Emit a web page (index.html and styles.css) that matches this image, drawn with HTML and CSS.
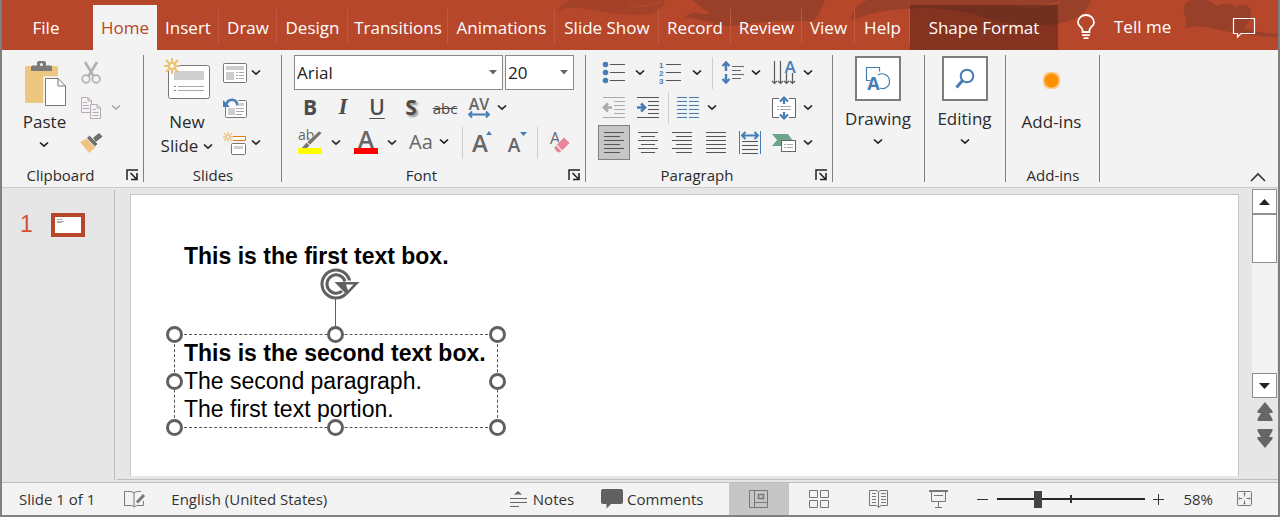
FILE: index.html
```html
<!DOCTYPE html>
<html lang="en">
<head>
<meta charset="utf-8">
<title>Presentation editor</title>
<link rel="stylesheet" href="styles.css">
</head>
<body>
<svg class="defs" aria-hidden="true">
  <symbol id="chev" viewBox="0 0 10 7"><path d="M1 1.500 5 5.200 9 1.500" fill="none" stroke="currentColor" stroke-width="1.700"/></symbol>
  <symbol id="launch" viewBox="0 0 13 12"><path d="M1 11V1H12" fill="none" stroke="#222" stroke-width="1.500"/><path d="M4.500 4 10.500 10M11 4V10.500H5" fill="none" stroke="#222" stroke-width="1.600"/></symbol>
</svg>
<div class="window">
<header class="titlebar">
  <svg class="art" viewBox="0 0 740 50" width="740" height="50" aria-hidden="true">
    <g fill="#98402a">
      <path d="M17 13C19 6 25 1 30 0H125C124 6 119 12 112 14 90 17 60 12 40 8 30 7 22 9 17 13Z" opacity=".6"/>
      <path d="M152 0H285C281 9 278 17 273 21 260 22 240 20 215 23 195 27 180 27 170 22L145 17C148 14 154 11 163 14 172 15 169 13 164 9Z"/>
      <path d="M311 20C312 9 320 2 328 0H551C548 10 540 18 528 21 505 29 470 26 440 16 410 7 370 6 340 12 326 15 318 18 311 20Z"/>
      <path d="M644 29C648 25 647 20 644 13 642 5 647 0 653 0H666C671 0 674 4 677 6 684 2 693 4 696 7 702 2 712 5 711 14 712 20 707 24 705 28 720 33 730 34 740 34V36C715 38 690 32 670 28 660 26 650 25 644 29Z"/>
    </g>
    <path d="M90 6C100 8 116 4 120 2M475 5C490 9 510 5 520 2" fill="none" stroke="#b5472b" stroke-width="2" stroke-dasharray="3 1"/>
  </svg>
  <nav class="tabs">
    <button class="tab tab-file">File</button>
    <button class="tab active">Home</button>
    <button class="tab">Insert</button>
    <button class="tab">Draw</button>
    <button class="tab">Design</button>
    <button class="tab">Transitions</button>
    <button class="tab">Animations</button>
    <button class="tab">Slide Show</button>
    <button class="tab">Record</button>
    <button class="tab">Review</button>
    <button class="tab">View</button>
    <button class="tab">Help</button>
    <button class="tab context">Shape Format</button>
  </nav>
  <button class="tellme">
    <svg width="20" height="26" viewBox="0 0 20 26" fill="none" stroke="#fff" stroke-width="1.800"><path d="M6.500 18V16C6 13 2 12 2 8.500A8 7.500 0 0 1 18 8.500C18 12 14 13 13.500 16V18Z"/><path d="M6 21.200H14M7.500 24.200H12.500"/></svg>
    <span>Tell me</span>
  </button>
  <button class="comment" aria-label="Comments pane">
    <svg width="24" height="22" viewBox="0 0 24 22" fill="none" stroke="#fff" stroke-width="1.200"><path d="M1.500 1.500H22.500V16.500H9L5.500 20V16.500H1.500Z"/></svg>
  </button>
</header>

<section class="ribbon">
  <div class="group">
    <div class="body clip-body">
      <button class="big">
        <svg width="44" height="48" viewBox="0 0 44 48"><rect x="1" y="6" width="33" height="37" rx="1.500" fill="#edc77f"/><path d="M7 11V7Q7 5.500 8.500 5.500H13V3Q13 1 15 1H20Q22 1 22 3V5.500H26.500Q28 5.500 28 7V11Z" fill="#7a7a7a"/><circle cx="17.500" cy="4.500" r="1.500" fill="#f3f3f3"/><path d="M20.500 17.500H34L42.500 26V46.500H20.500Z" fill="#fff" stroke="#f3f3f3" stroke-width="2.500"/><path d="M21.500 18.500H34L41.500 26V45.500H21.500Z" fill="#fff" stroke="#777"/><path d="M34 18.500V26H41.500" fill="none" stroke="#777"/></svg>
        <span>Paste</span>
        <svg class="chev"><use href="#chev"/></svg>
      </button>
      <div class="small-col">
        <button aria-label="Cut"><svg width="20" height="22" viewBox="0 0 20 22" fill="none" stroke="#b1b1b1"><path d="M4 0 12.500 14M16 0 7.500 14" stroke-width="2.600"/><circle cx="5" cy="17" r="3.800" stroke-width="1.700"/><circle cx="15.200" cy="17" r="3.800" stroke-width="1.700"/></svg></button><span></span>
        <button aria-label="Copy"><svg width="22" height="22" viewBox="0 0 22 22" fill="#f5f1f5" stroke="#b3acb3"><path d="M1.500.5H8L11.500 4V15.500H1.500ZM8 .5V4H11.500M3 5.500H7M3 8.500H9M3 11.500H9"/><path d="M10.500 7.500H17L20.500 11V21.500H10.500ZM17 7.500V11H20.500M12.500 12.500H16M12.500 15.500H18.500M12.500 18.500H18.500"/></svg></button>
        <button class="drop muted" aria-label="Copy options"><svg class="chev"><use href="#chev"/></svg></button>
        <button aria-label="Format painter"><svg width="24" height="22" viewBox="0 0 24 22"><path d="M1 10 9 6 17 15 10 21Z" fill="#edc483"/><path d="M7.500 6 10.500 3 19 12 16 15Z" fill="#6f6f6f" stroke="#f3f3f3" stroke-width="1"/><path d="M15 6 20 2 22.500 4.500 17 9Z" fill="#6f6f6f" stroke="#6f6f6f" stroke-width="1.500"/></svg></button>
      </div>
    </div>
    <div class="foot"><span>Clipboard</span><button class="launch" aria-label="Clipboard settings"><svg><use href="#launch"/></svg></button></div>
  </div>

  <div class="group">
    <div class="body slides-body">
      <button class="big">
        <svg width="48" height="44" viewBox="0 0 48 44"><rect x="5.500" y="8.500" width="41" height="33" rx="2" fill="#fff" stroke="#777"/><path d="M11 14H41V23H11Z" fill="#cfcfcf"/><path d="M15 29.500H41M15 33.500H41" stroke="#aaa"/><path d="M11 29.500H13M11 33.500H13" stroke="#888"/><circle cx="9" cy="9" r="6" fill="#f3f3f3"/><g stroke="#edc072" stroke-width="2"><path d="M9 1V5M9 13V17M1 9H5M13 9H17M3 3 6.500 6.500M11.500 11.500 15 15M15 3 11.500 6.500M3 15 6.500 11.500"/><circle cx="9" cy="9" r="3" fill="#fff"/></g></svg>
        <span>New</span>
        <span class="with-chev">Slide <svg class="chev"><use href="#chev"/></svg></span>
      </button>
      <div class="small-col">
        <button aria-label="Layout"><svg width="24" height="20" viewBox="0 0 24 20"><rect x=".5" y=".5" width="23" height="19" rx="1" fill="#fff" stroke="#777"/><path d="M3 3H21V7H3ZM3 9H11V17H3Z" fill="#cdcdcd"/><path d="M13 9.500H15M16 9.500H21M13 12.500H15M16 12.500H21M13 15.500H15M16 15.500H21" stroke="#aaa"/></svg></button>
        <button class="drop" aria-label="Layout options"><svg class="chev"><use href="#chev"/></svg></button>
        <button aria-label="Reset"><svg width="24" height="22" viewBox="0 0 24 22"><rect x="2.500" y="3.500" width="21" height="17" rx="1" fill="#fff" stroke="#777"/><path d="M12 6H21V9H12ZM5 11H12V18H5Z" fill="#cdcdcd"/><path d="M13 11.500H21M13 14.500H21M13 17.500H19" stroke="#aaa"/><path d="M3 8C5 1 13 1 14.500 8" fill="none" stroke="#f3f3f3" stroke-width="5"/><path d="M3 8C5 1 13 1 14.500 8" fill="none" stroke="#477db5" stroke-width="2.500"/><path d="M0 3V10H7Z" fill="#477db5"/></svg></button><span></span>
        <button aria-label="Section"><svg width="24" height="24" viewBox="0 0 24 24"><path d="M10 5.500H22.500V9.500H10" fill="#fff" stroke="#e07b1a"/><rect x="8.500" y="12.500" width="14" height="11" rx="1" fill="#fff" stroke="#777"/><path d="M11 15H20V18H11Z" fill="#cdcdcd"/><g stroke="#edc483" stroke-width="1.300"><path d="M5 1V4M5 8V11M0 6H3M7 6H10M1 2 3.500 4.500M6.500 7.500 9 10M9 2 6.500 4.500M1 10 3.500 7.500"/><circle cx="5" cy="6" r="1.800" fill="#fff"/></g></svg></button>
        <button class="drop" aria-label="Section options"><svg class="chev"><use href="#chev"/></svg></button>
      </div>
    </div>
    <div class="foot"><span>Slides</span></div>
  </div>

  <div class="group">
    <div class="body rows">
      <div class="row font-row1">
        <label class="combo"><select aria-label="Font"><option>Arial</option></select><svg width="8" height="5" viewBox="0 0 8 5"><path d="M0 0H8L4 4.500Z" fill="#666"/></svg></label>
        <label class="combo"><select aria-label="Font size"><option>20</option></select><svg width="8" height="5" viewBox="0 0 8 5"><path d="M0 0H8L4 4.500Z" fill="#666"/></svg></label>
      </div>
      <div class="row font-row2">
        <button class="glyph bold">B</button>
        <button class="glyph italic">I</button>
        <button class="glyph under">U</button>
        <button class="glyph shadow">S</button>
        <button class="glyph strike">abc</button>
        <button aria-label="Character spacing"><svg width="24" height="22" viewBox="0 0 24 22"><text x="12" y="13" text-anchor="middle" class="t-av">AV</text><path d="M2 17.500H22M5 14.500 2 17.500 5 20.500M19 14.500 22 17.500 19 20.500" fill="none" stroke="#477db5" stroke-width="1.800"/></svg></button>
        <button class="drop" aria-label="Spacing options"><svg class="chev"><use href="#chev"/></svg></button>
      </div>
      <div class="row font-row3">
        <button aria-label="Highlight"><svg width="24" height="26" viewBox="0 0 24 26"><text x="0" y="10" class="t-ab">ab</text><path d="M24 3 21 1 9 12 12 15Z" fill="#757575" stroke="#f3f3f3" stroke-width=".7"/><path d="M8.500 12.500 11.500 15.500 9 18H4Z" fill="#757575"/><path d="M0 18H24V24H0Z" fill="#ff0"/></svg></button>
        <button class="drop" aria-label="Highlight options"><svg class="chev"><use href="#chev"/></svg></button>
        <button aria-label="Font color"><svg width="24" height="26" viewBox="0 0 24 26"><text x="12" y="18" text-anchor="middle" class="t-a">A</text><path d="M0 18H24V24H0Z" fill="#f00"/></svg></button>
        <button class="drop" aria-label="Font color options"><svg class="chev"><use href="#chev"/></svg></button>
        <button class="case">Aa<svg class="chev"><use href="#chev"/></svg></button>
        <i class="sep"></i>
        <button aria-label="Increase font size"><svg width="22" height="26" viewBox="0 0 22 26"><text x="8" y="22" text-anchor="middle" class="t-a">A</text><path d="M14 5H20L17 1Z" fill="#477db5"/></svg></button>
        <button aria-label="Decrease font size"><svg width="20" height="26" viewBox="0 0 20 26"><text x="7" y="22" text-anchor="middle" class="t-a2">A</text><path d="M13 2H20L16.500 6Z" fill="#477db5"/></svg></button>
        <i class="sep"></i>
        <button aria-label="Clear formatting"><svg width="20" height="24" viewBox="0 0 20 24"><text x="5" y="13" text-anchor="middle" class="t-a3">A</text><path d="M5 15 14 6 20 12 11 21Q9 23 7 21L5 19Q3 17 5 15Z" fill="#e8879b" stroke="#f3f3f3" stroke-width=".8"/><path d="M6 13.500 12.500 20.500" stroke="#f3f3f3" stroke-width="1.200"/></svg></button>
      </div>
    </div>
    <div class="foot"><span>Font</span><button class="launch" aria-label="Font settings"><svg><use href="#launch"/></svg></button></div>
  </div>

  <div class="group">
    <div class="body rows">
      <div class="row par-row1">
        <button aria-label="Bullets"><svg width="24" height="24" viewBox="0 0 24 24"><g fill="#477db5"><circle cx="3.500" cy="3.500" r="2.800"/><circle cx="3.500" cy="11.500" r="2.800"/><circle cx="3.500" cy="19.500" r="2.800"/></g><path d="M8 3.500H23M8 11.500H23M8 19.500H23" stroke="#555"/></svg></button>
        <button class="drop" aria-label="Bullet options"><svg class="chev"><use href="#chev"/></svg></button>
        <button aria-label="Numbering"><svg width="24" height="24" viewBox="0 0 24 24"><g class="t-num"><text x="1" y="7">1</text><text x="1" y="15">2</text><text x="1" y="23">3</text></g><path d="M8 3.500H23M8 11.500H23M8 19.500H23" stroke="#555"/></svg></button>
        <button class="drop" aria-label="Numbering options"><svg class="chev"><use href="#chev"/></svg></button>
        <i class="sep"></i>
        <button aria-label="Line spacing"><svg width="24" height="24" viewBox="0 0 24 24"><path d="M5 1V10M1.500 5 5 1.500 8.500 5M5 13V22M1.500 18 5 21.500 8.500 18" fill="none" stroke="#477db5" stroke-width="2.400"/><path d="M11 5.500H23M11 9.500H20M11 13.500H23M11 17.500H20" stroke="#666"/></svg></button>
        <button class="drop" aria-label="Line spacing options"><svg class="chev"><use href="#chev"/></svg></button>
        <button aria-label="Text direction"><svg width="26" height="24" viewBox="0 0 26 24"><path d="M3.500 0V22M9.500 0V22M15.500 12V22M21.500 12V22M1 20 3.500 22.500 6 20M7 20 9.500 22.500 12 20M13 20 15.500 22.500 18 20M19 20 21.500 22.500 24 20" fill="none" stroke="#5a5a5a" stroke-width="1.200"/><text x="19" y="12" text-anchor="middle" class="t-dir">A</text></svg></button>
        <button class="drop" aria-label="Direction options"><svg class="chev"><use href="#chev"/></svg></button>
      </div>
      <div class="row par-row2">
        <button aria-label="Decrease indent"><svg width="24" height="22" viewBox="0 0 24 22"><path d="M1 .5H23M12 4.500H23M12 8.500H23M12 12.500H23M12 16.500H23M1 20.500H23" stroke="#aaa"/><path d="M2 10.500H10M6 6.500 2 10.500 6 14.500" fill="none" stroke="#aaa" stroke-width="2.600"/></svg></button>
        <button aria-label="Increase indent"><svg width="24" height="22" viewBox="0 0 24 22"><path d="M1 .5H23M12 4.500H23M12 8.500H23M12 12.500H23M12 16.500H23M1 20.500H23" stroke="#555"/><path d="M1 10.500H9M5 6.500 9 10.500 5 14.500" fill="none" stroke="#477db5" stroke-width="2.600"/></svg></button>
        <i class="sep"></i>
        <button aria-label="Columns"><svg width="22" height="22" viewBox="0 0 22 22"><path d="M0 .5H10M12 .5H22M0 4.500H10M12 4.500H22M0 8.500H10M12 8.500H22M0 12.500H10M12 12.500H22M0 16.500H10M12 16.500H22M0 20.500H10M12 20.500H22" stroke="#477db5"/></svg></button>
        <button class="drop" aria-label="Column options"><svg class="chev"><use href="#chev"/></svg></button>
        <span></span>
        <button aria-label="Align text"><svg width="24" height="24" viewBox="0 0 24 24"><path d="M.5 2.500H23.500V21.500H.5Z" fill="#fff" stroke="#666"/><path d="M5 10.500H7M8 10.500H19M5 13.500H7M8 13.500H19" stroke="#aaa"/><path d="M7 0H17V8H7ZM7 16H17V24H7Z" fill="#fff"/><path d="M12 8V2M8 5.500 12 1.500 16 5.500M12 16V22M8 18.500 12 22.500 16 18.500" fill="none" stroke="#477db5" stroke-width="2.200"/></svg></button>
        <button class="drop" aria-label="Align text options"><svg class="chev"><use href="#chev"/></svg></button>
      </div>
      <div class="row par-row3">
        <button class="pressed" aria-label="Align left" aria-pressed="true"><svg width="22" height="22" viewBox="0 0 22 22"><path d="M1 .5H21M1 4.500H17M1 8.500H21M1 12.500H17M1 16.500H21M1 20.500H17" stroke="#555"/></svg></button>
        <button aria-label="Center"><svg width="22" height="22" viewBox="0 0 22 22"><path d="M1 .5H21M4 4.500H18M1 8.500H21M4 12.500H18M1 16.500H21M4 20.500H18" stroke="#555"/></svg></button>
        <button aria-label="Align right"><svg width="22" height="22" viewBox="0 0 22 22"><path d="M1 .5H21M5 4.500H21M1 8.500H21M5 12.500H21M1 16.500H21M5 20.500H21" stroke="#555"/></svg></button>
        <button aria-label="Justify"><svg width="22" height="22" viewBox="0 0 22 22"><path d="M1 .5H21M1 4.500H21M1 8.500H21M1 12.500H21M1 16.500H21M1 20.500H21" stroke="#555"/></svg></button>
        <button aria-label="Distribute"><svg width="22" height="24" viewBox="0 0 22 24"><path d="M.5 0V23M21.500 0V23" stroke="#477db5"/><path d="M3 4.500H19M6.500 1 3 4.500 6.500 8M15.500 1 19 4.500 15.500 8" fill="none" stroke="#477db5" stroke-width="2"/><path d="M3 10.500H19M3 14.500H19M3 18.500H19M3 22.500H19" stroke="#555"/></svg></button>
        <button aria-label="Convert to diagram"><svg width="24" height="20" viewBox="0 0 24 20"><path d="M0 1H16L21 8H10V13H0L5 7Z" fill="#6aa58c"/><rect x="9.500" y="7.500" width="14" height="11" fill="#fff" stroke="#666"/><path d="M12 11.500H14M15 11.500H21M12 14.500H14M15 14.500H21" stroke="#aaa"/></svg></button>
        <button class="drop" aria-label="Diagram options"><svg class="chev"><use href="#chev"/></svg></button>
      </div>
    </div>
    <div class="foot"><span>Paragraph</span><button class="launch" aria-label="Paragraph settings"><svg><use href="#launch"/></svg></button></div>
  </div>

  <div class="group">
    <button class="tile">
      <span class="tile-box"><svg width="26" height="26" viewBox="0 0 26 26"><path d="M5.500 14.500H1.500V1.500H14.500V5.500" fill="none" stroke="#477db5" stroke-width="1.200"/><path d="M13 9C18 6 24.500 9 24.500 15.500 24.500 21 19 24 15 22" fill="none" stroke="#477db5" stroke-width="1.200"/><text x="8.500" y="24" text-anchor="middle" class="t-draw">A</text></svg></span>
      <span>Drawing</span>
      <svg class="chev"><use href="#chev"/></svg>
    </button>
  </div>
  <div class="group">
    <button class="tile">
      <span class="tile-box"><svg width="20" height="22" viewBox="0 0 20 22" fill="none" stroke="#477db5"><circle cx="12" cy="8" r="6.300" stroke-width="2"/><path d="M8 12 1.500 19.500" stroke-width="3"/></svg></span>
      <span>Editing</span>
      <svg class="chev"><use href="#chev"/></svg>
    </button>
  </div>
  <div class="group">
    <div class="body">
      <button class="addins"><span class="dot"></span><span>Add-ins</span></button>
    </div>
    <div class="foot"><span>Add-ins</span></div>
  </div>
  <button class="collapse" aria-label="Collapse ribbon"><svg width="16" height="10" viewBox="0 0 16 10"><path d="M1 9 8 2 15 9" fill="none" stroke="#333" stroke-width="1.600"/></svg></button>
</section>

<main class="workspace">
  <aside class="thumbs">
    <span class="num">1</span>
    <button class="thumb" aria-label="Slide 1"><svg width="26" height="16" viewBox="0 0 26 16"><path d="M2 2.500H8M2 4.500H9M2 5.500H7" stroke="#999" stroke-width=".8"/></svg></button>
  </aside>
  <section class="stage">
    <div class="slide">
      <div class="textbox first"><p><b>This is the first text box.</b></p></div>
      <div class="textbox second">
        <p><b>This is the second text box.</b></p>
        <p>The second paragraph.</p>
        <p>The first text portion.</p>
        <i class="stem"></i>
        <svg class="rotate" width="42" height="34" viewBox="0 0 42 34" fill="none"><circle cx="17" cy="16" r="14" fill="#fff" stroke="#606060" stroke-width="3"/><path d="M16 12.500H42L28.500 27.500 22 21Z" fill="#fff"/><path d="M23 23.200A9.200 9.200 0 1 1 26 13.500" stroke="#606060" stroke-width="3"/><path d="M15.500 14H40.500L28 27Z" fill="#606060"/><path d="M27 16.500H34.500L29 22.500Z" fill="#fff"/><path d="M23.500 15 25.500 17.500" stroke="#606060" stroke-width="2"/></svg>
        <i class="handle tl"></i><i class="handle tc"></i><i class="handle tr"></i>
        <i class="handle ml"></i><i class="handle mr"></i>
        <i class="handle bl"></i><i class="handle bc"></i><i class="handle br"></i>
      </div>
    </div>
    <div class="scroll">
      <button class="sbtn" aria-label="Scroll up"><svg width="11" height="6" viewBox="0 0 11 6"><path d="M0 6H11L5.500 0Z" fill="#222"/></svg></button>
      <div class="track"><div class="sthumb"></div></div>
      <button class="sbtn" aria-label="Scroll down"><svg width="11" height="6" viewBox="0 0 11 6"><path d="M0 0H11L5.500 6Z" fill="#222"/></svg></button>
      <button class="jump" aria-label="Previous slide"><svg width="16" height="20" viewBox="0 0 16 20"><path d="M8 0 15.500 9V11H12L15.500 17V19H.5V17L4 11H.5V9Z" fill="#666"/></svg></button>
      <button class="jump" aria-label="Next slide"><svg width="16" height="20" viewBox="0 0 16 20"><path d="M8 20 15.500 11V9H12L15.500 3V1H.5V3L4 9H.5V11Z" fill="#666"/></svg></button>
    </div>
  </section>
</main>

<footer class="status">
  <span class="count">Slide 1 of 1</span>
  <button class="spell" aria-label="Spelling"><svg width="22" height="18" viewBox="0 0 22 18" fill="none" stroke="#777"><path d="M10 3C8 1 5 1.500 .5 1.500V15.500H7.500L10 17L12.500 15.500H19.500V11M10 3V16M10 3C12 1 15 1.500 17 1.500"/><path d="M13 12.500 20 5" stroke-width="3"/></svg></button>
  <button class="lang">English (United States)</button>
  <div class="right">
    <button class="txt notes"><svg width="18" height="18" viewBox="0 0 18 18"><path d="M5 4.500H13L9 1Z" fill="#666"/><path d="M1 8.500H18M1 12.500H18M1 16.500H10" stroke="#666"/></svg>Notes</button>
    <button class="txt comm"><svg width="22" height="20" viewBox="0 0 22 20"><path d="M2 0H20Q22 0 22 2V13Q22 15 20 15H10L5.500 19.500V15H2Q0 15 0 13V2Q0 0 2 0Z" fill="#606060"/></svg>Comments</button>
    <button class="view on" aria-label="Normal view"><svg width="20" height="18" viewBox="0 0 20 18" fill="none" stroke="#777"><path d="M.5.5H18.500V17.500H.5ZM5.500.5V17.500M5.500 12.500H18.500"/><path d="M9.500 4.500H14.500V8.500H9.500Z" stroke-width="1.500"/></svg></button>
    <button class="view" aria-label="Slide sorter"><svg width="20" height="18" viewBox="0 0 20 18" fill="none" stroke="#777"><path d="M.5.5H8.500V7.500H.5ZM11.500.5H19.500V7.500H11.500ZM.5 10.500H8.500V17.500H.5ZM11.500 10.500H19.500V17.500H11.500Z"/></svg></button>
    <button class="view" aria-label="Reading view"><svg width="20" height="18" viewBox="0 0 20 18" fill="none" stroke="#777"><path d="M9.500 2.500 8 .5H.5V15.500H7.500L9.500 17.500 12 15.500H18.500V.5H11ZM9.500 2V17M3 3.500H7M3 6.500H7M3 9.500H7M3 12.500H7M12 3.500H17M12 6.500H17M12 9.500H17M12 12.500H17"/></svg></button>
    <button class="view" aria-label="Slide show"><svg width="20" height="18" viewBox="0 0 20 18" fill="none" stroke="#777"><path d="M0 1H19" stroke-width="2"/><path d="M2.500 1.500V11.500H16.500V1.500M5 5.500H14M9.500 11.500V17M6 17.500H13"/></svg></button>
    <button class="zoom" aria-label="Zoom out"><svg width="13" height="13" viewBox="0 0 13 13"><path d="M1 6.500H12" stroke="#333"/></svg></button>
    <input class="slider" type="range" min="0" max="100" value="26" aria-label="Zoom">
    <button class="zoom" aria-label="Zoom in"><svg width="13" height="13" viewBox="0 0 13 13"><path d="M1 6.500H12M6.500 1V12" stroke="#333"/></svg></button>
    <button class="percent">58%</button>
    <button class="fit" aria-label="Fit to window"><svg width="16" height="16" viewBox="0 0 16 16" fill="none" stroke="#777"><rect x=".5" y=".5" width="14" height="14" rx="1"/><path d="M7.500 1.500V5.500M7.500 9.500V13.500M1.500 7.500H5.500M9.500 7.500H13.500M6.500 2.500H8.500M6.500 12.500H8.500M2.500 6.500V8.500M12.500 6.500V8.500"/></svg></button>
  </div>
</footer>
</div>
</body>
</html>
```
FILE: styles.css
```css
* { box-sizing: border-box; }
body { margin: 0; font-family: "Open Sans", "Noto Sans", sans-serif; font-size: 17px; color: #2b2b2b; background: #f3f3f3; }
.defs { position: absolute; width: 0; height: 0; }
.window { display: flex; flex-direction: column; min-height: 100vh; border: 2px solid #808080; border-top: 0; }
button { border: 0; padding: 0; margin: 0; background: none; color: inherit; font: inherit; display: flex; align-items: center; justify-content: center; }
svg { display: block; flex: none; overflow: visible; }
p { margin: 0; }
.chev { width: 10px; height: 7px; color: #222; }

/* Title bar */
.titlebar { position: relative; display: flex; height: 50px; background: #b7472a; color: #fff; overflow: hidden; }
.art { position: absolute; left: 538px; top: 0; }
.tabs { position: relative; display: grid; grid-template-columns: 91px 64px 62px 58px 71px 100px 107px 104px 72px 71px 53px 55px 148px; padding-top: 5px; }
.tab { position: relative; white-space: nowrap; }
.tab-file { padding-right: 3px; }
.tab + .tab::after { content: ""; position: absolute; right: 0; top: 4px; bottom: 6px; width: 1px; background: #c0583e; }
.tab.active { background: #f3f3f3; color: #b7472a; }
.tab.active::after, .tab.context::after { display: none; }
.tab.context { background: rgba(60, 25, 18, .42); }
.tellme { position: relative; gap: 18px; margin-left: 18px; padding-top: 3px; }
.comment { position: relative; margin-left: auto; margin-right: 22px; padding-top: 6px; }

/* Ribbon */
.ribbon { display: grid; grid-template-columns: 142px 138px 304px 247px 92px 81px 94px 1fr; padding-top: 5px; background: #f3f3f3; border-bottom: 1px solid #cbcbcb; }
.group { display: flex; flex-direction: column; height: 132px; background: linear-gradient(#808080, #808080) right top / 1px 127px no-repeat; }
.body { height: 105px; display: flex; }
.foot { display: flex; height: 27px; padding-top: 2px; align-items: center; font-size: 15px; line-height: 20px; }
.foot span { flex: 1; text-align: center; }
.launch { width: 18px; margin-left: 7px; justify-content: flex-start; }
.launch svg { width: 13px; height: 12px; }
.big { flex-direction: column; justify-content: flex-start; line-height: 24px; }
.with-chev { display: flex; align-items: center; gap: 5px; }
.clip-body { padding-left: 14px; }
.clip-body .big { width: 60px; padding-top: 5px; }
.clip-body .big span { padding: 2px 3px 0 0; }
.clip-body .big > .chev { margin: 7px 4px 0 0; }
.clip-body .small-col { grid-template-columns: 30px 20px; }
.slides-body { padding-left: 8px; }
.slides-body .big { width: 70px; padding-top: 2px; }
.slides-body .big > svg { margin-bottom: 9px; }
.slides-body .small-col { grid-template-columns: 25px 18px; }
.small-col { display: grid; grid-template-rows: repeat(3, 35px); }
.muted .chev { color: #aaa; }

.rows { flex-direction: column; padding-left: 12px; }
.row { display: grid; height: 35px; }
.sep { width: 1px; height: 32px; background: #cdcdcd; place-self: center; }
.font-row1 { grid-template-columns: 209px 69px; gap: 2px; }
.font-row2 { grid-template-columns: 32px 34px 34px 34px 34px 34px 12px; }
.font-row3 { grid-template-columns: 32px 20px 40px 12px 62px 4px 38px 30px 10px 36px; }
.par-row1 { grid-template-columns: 32px 20px 40px 14px 16px 26px 20px 36px 12px; }
.par-row2 { grid-template-columns: 32px 36px 4px 36px 12px 48px 36px 12px; }
.par-row3 { grid-template-columns: 32px 36px 32px 36px 32px 36px 12px; }
.combo { position: relative; display: flex; }
.combo select { appearance: none; flex: 1; border: 1px solid #8a8a8a; border-radius: 0; background: #fff; padding: 0 2px; font: inherit; color: #222; }
.combo svg { position: absolute; right: 6px; top: 15px; }
.glyph { font-size: 21px; color: #4c4c4c; line-height: 24px; padding-bottom: 2px; }
.bold { font-weight: 700; }
.italic { font-family: "Liberation Serif", serif; font-style: italic; font-weight: 700; font-size: 23px; }
.under { text-decoration: underline; text-decoration-thickness: 1px; text-underline-offset: 3px; font-weight: 600; }
.shadow { font-weight: 700; text-shadow: 2px 2px 2px #999; }
.strike { font-size: 15px; text-decoration: line-through; padding-top: 2px; }
.case { gap: 6px; font-size: 20px; color: #666; padding-bottom: 2px; }
.pressed { background: #c6c6c6; border: 1px solid #808080; }
svg text { fill: #666; font-family: "Open Sans", sans-serif; }
.t-av { font-size: 16px; font-weight: 600; }
.t-ab { font-size: 14px; }
.t-a { font-size: 24px; font-weight: 600; }
.t-a2 { font-size: 19px; font-weight: 600; }
.t-a3 { font-size: 16px; }
svg .t-num text { font-family: "Liberation Sans", sans-serif; font-size: 8px; font-weight: 700; fill: #477db5; }
svg .t-dir { font-size: 17px; font-weight: 600; fill: #477db5; }
svg .t-draw { font-size: 18px; font-weight: 700; fill: #477db5; }

.tile { flex-direction: column; align-self: center; padding: 1px 2px 0 0; line-height: 24px; }
.tile-box { display: grid; place-items: center; width: 46px; height: 45px; margin-bottom: 6px; background: #fff; border: 2px solid #7d7d7d; }
.tile > .chev { margin-top: 7px; }
.addins { flex: 1; flex-direction: column; justify-content: flex-start; padding: 17px 3px 0 0; gap: 21px; line-height: 24px; }
.dot { width: 17px; height: 17px; border-radius: 5px; background: radial-gradient(circle, #ff9000 52%, #fbc987 65%, #f3f3f3 95%); }
.collapse { justify-self: end; align-self: end; margin: 0 12px 5px 0; }

/* Workspace */
.workspace { flex: 1; display: flex; background: #e6e6e6; }
.thumbs { display: flex; align-items: flex-start; width: 113px; margin: 2px 0; padding: 23px 0 0 18px; gap: 18px; border-right: 1px solid #bdbdbd; }
.num { font-family: "Liberation Sans", sans-serif; font-size: 23px; line-height: 22px; color: #d35230; }
.thumb { padding: 4px; background: #b7472a; }
.thumb svg { background: #fff; }
.stage { flex: 1; display: flex; margin: 0 0 2px 2px; border-bottom: 1px solid #bdbdbd; }
.slide { position: relative; flex: 1; margin: 6px 13px 3px 13px; background: #fff; border: 1px solid #c6c6c6; border-bottom: 0; }
.textbox { position: absolute; font-family: "Liberation Sans", Arial, sans-serif; font-size: 23px; line-height: 28px; color: #000; white-space: nowrap; }
.first { left: 53px; top: 47px; }
.second { left: 43px; top: 139px; width: 324px; padding: 4px 0 4px 9px; border: 1px dashed #555; }
.stem { position: absolute; left: 160px; top: -40px; width: 1px; height: 32px; background: #606060; }
.rotate { position: absolute; left: 144px; top: -67px; }
.handle { position: absolute; width: 17px; height: 17px; border: 3px solid #606060; border-radius: 50%; background: #fff; }
.tl, .tc, .tr { top: -9px; }
.ml, .mr { top: calc(50% - 8px); }
.bl, .bc, .br { bottom: -9px; }
.tl, .ml, .bl { left: -9px; }
.tc, .bc { left: calc(50% - 9px); }
.tr, .mr, .br { right: -9px; }
.scroll { display: flex; flex-direction: column; align-items: stretch; width: 25px; margin: 1px 1px 31px 0; }
.sbtn { height: 25px; background: #fff; border: 1px solid #8f8f8f; }
.track { flex: 1; background: #f3f3f3; }
.sthumb { height: 49px; background: #fff; border: 1px solid #8f8f8f; }
.jump { height: 20px; margin-top: 4px; }
.jump + .jump { margin-top: 6px; }

/* Status bar */
.status { display: flex; align-items: stretch; height: 33px; border-top: 1px solid #bdbdbd; background: #f3f3f3; font-size: 15px; color: #333; }
.count { align-self: center; margin-left: 17px; }
.spell { margin-left: 29px; }
.lang { margin-left: 25px; }
.right { display: flex; margin-left: auto; }
.txt { gap: 6px; }
.notes { margin-right: 27px; }
.comm { gap: 4px; margin-right: 26px; }
.view { width: 60px; }
.view.on { background: #c6c6c6; }
.zoom { width: 13px; margin-left: 7px; }
.slider { appearance: none; align-self: center; width: 148px; height: 18px; margin: 0 0 0 8px; background: linear-gradient(#333, #333) center / 2px 8px no-repeat, linear-gradient(#262626, #262626) center / 100% 2px no-repeat; }
.slider::-webkit-slider-thumb { appearance: none; width: 8px; height: 17px; background: #444; }
.percent { margin-left: 18px; }
.fit { margin: 0 25px 0 24px; }
```
